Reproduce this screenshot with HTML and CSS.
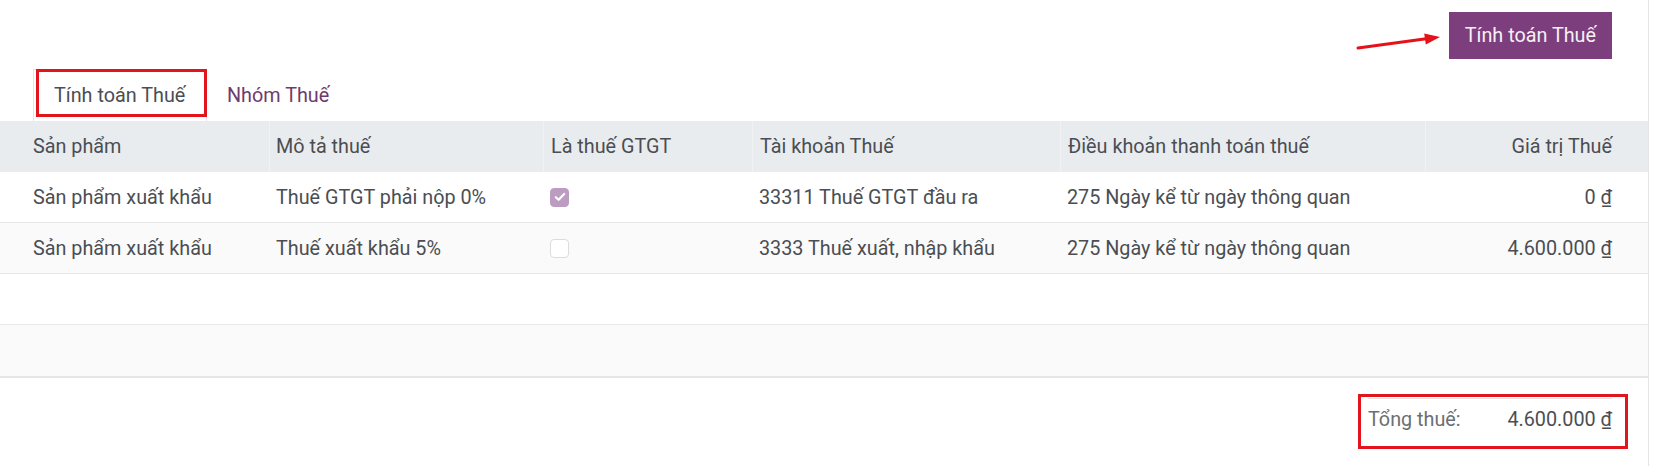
FILE: index.html
```html
<!DOCTYPE html>
<html lang="vi">
<head>
<meta charset="utf-8">
<title>Tính toán Thuế</title>
<link rel="stylesheet" href="styles.css">
</head>
<body>
<div class="sheet">
  <div class="toolbar">
    <button class="btn-primary">Tính toán Thuế</button>
    <svg class="arrow" width="100" height="30" viewBox="0 0 100 30">
      <line x1="8" y1="23" x2="78" y2="13.6" stroke="#e5121a" stroke-width="3" stroke-linecap="round"/>
      <polygon points="90,12 75.8,19.5 74.2,8.5" fill="#e5121a"/>
    </svg>
  </div>
  <ul class="tabs">
    <li class="tab active"><span class="mark"></span>Tính toán Thuế</li>
    <li class="tab">Nhóm Thuế</li>
  </ul>
  <div class="grid">
    <div class="row head">
      <div class="cell first">Sản phẩm</div>
      <div class="cell">Mô tả thuế</div>
      <div class="cell">Là thuế GTGT</div>
      <div class="cell">Tài khoản Thuế</div>
      <div class="cell">Điều khoản thanh toán thuế</div>
      <div class="cell num">Giá trị Thuế</div>
    </div>
    <div class="row">
      <div class="cell first">Sản phẩm xuất khẩu</div>
      <div class="cell">Thuế GTGT phải nộp 0%</div>
      <div class="cell"><span class="check on"><svg width="12" height="10" viewBox="0 0 12 10"><path d="M1.8 5.2 L4.6 7.8 L10.2 2" fill="none" stroke="#fff" stroke-width="2.2" stroke-linecap="round" stroke-linejoin="round"/></svg></span></div>
      <div class="cell">33311 Thuế GTGT đầu ra</div>
      <div class="cell">275 Ngày kể từ ngày thông quan</div>
      <div class="cell num">0&nbsp;<span class="cur">₫</span></div>
    </div>
    <div class="row alt">
      <div class="cell first">Sản phẩm xuất khẩu</div>
      <div class="cell">Thuế xuất khẩu 5%</div>
      <div class="cell"><span class="check"></span></div>
      <div class="cell">3333 Thuế xuất, nhập khẩu</div>
      <div class="cell">275 Ngày kể từ ngày thông quan</div>
      <div class="cell num">4.600.000&nbsp;<span class="cur">₫</span></div>
    </div>
    <div class="row"></div>
    <div class="row alt last"></div>
  </div>
  <div class="footer">
    <div class="total">
      <span class="mark"></span>
      <span class="label">Tổng thuế:</span>
      <span class="value">4.600.000&nbsp;<span class="cur">₫</span></span>
    </div>
  </div>
</div>
</body>
</html>
```

FILE: styles.css
```css
* { box-sizing: border-box; }
html, body { margin: 0; padding: 0; background: #fff; }
body {
  font-family: Roboto, "Noto Sans", "Liberation Sans", sans-serif;
  font-size: 19.8px;
  color: #4a4e53;
  width: 1654px;
  height: 466px;
  overflow: hidden;
}
.sheet {
  width: 1649px;
  height: 466px;
  border-right: 1px solid #e4e4e4;
}
.toolbar {
  position: relative;
  display: flex;
  justify-content: flex-end;
  padding: 12px 36px 10px 0;
}
.btn-primary {
  height: 47px;
  padding: 0 16px;
  border: none;
  border-radius: 0;
  background: #7c3e7d;
  color: #f6f0f6;
  font-family: inherit;
  font-size: 19.8px;
}
.arrow {
  position: absolute;
  left: 1350px;
  top: 25px;
}
.tabs {
  list-style: none;
  margin: 0;
  padding: 0 0 0 33px;
  display: flex;
  height: 52px;
}
.tab {
  position: relative;
  display: flex;
  align-items: center;
  padding: 0 20px 0 20px;
  color: #6f3a6e;
}
.tab.active {
  color: #4a4e53;
  border: 1px solid #e1e4e8;
  border-bottom: none;
  background: #fff;
  width: 174px;
}
.tab .mark {
  position: absolute;
  left: 2px;
  top: -1px;
  width: 171px;
  height: 48px;
  border: 3px solid #e3151c;
}
.grid { width: 1648px; border-bottom: 2px solid #e6e6e6; }
.row {
  display: grid;
  grid-template-columns: 269px 274px 209px 308px 365px 223px;
  height: 51px;
  border-bottom: 1px solid #e8e8e8;
  background: #fff;
}
.row.alt { background: #fafafa; }
.row.last { border-bottom: none; }
.row.head {
  background: #e9ecef;
  border-bottom: none;
}
.cell {
  display: flex;
  align-items: center;
  padding-left: 7px;
  white-space: nowrap;
}
.cell.first { padding-left: 33px; }
.cell.num { justify-content: flex-end; padding-right: 36px; }
.head .cell + .cell { border-left: 1px solid #f1f2f4; }
.head .cell.first + .cell { padding-left: 6px; }
.cur { text-decoration: underline; }
.check {
  display: inline-flex;
  align-items: center;
  justify-content: center;
  width: 19px;
  height: 19px;
  border: 1px solid #dcdcdc;
  border-radius: 4px;
  background: #fff;
}
.check.on {
  background: #bd9cc2;
  border-color: #bd9cc2;
}
.footer {
  display: flex;
  justify-content: flex-end;
  padding: 20px 36px 0 0;
}
.total {
  position: relative;
  width: 244px;
  display: flex;
  justify-content: space-between;
  align-items: center;
  height: 42px;
  border-top: 1px solid #e3e3e3;
}
.total .label { color: #6b6f73; }
.total .value { color: #4a4e53; }
.total .mark {
  position: absolute;
  left: -10px;
  top: -5px;
  width: 270px;
  height: 55px;
  border: 3px solid #e3151c;
}
```
